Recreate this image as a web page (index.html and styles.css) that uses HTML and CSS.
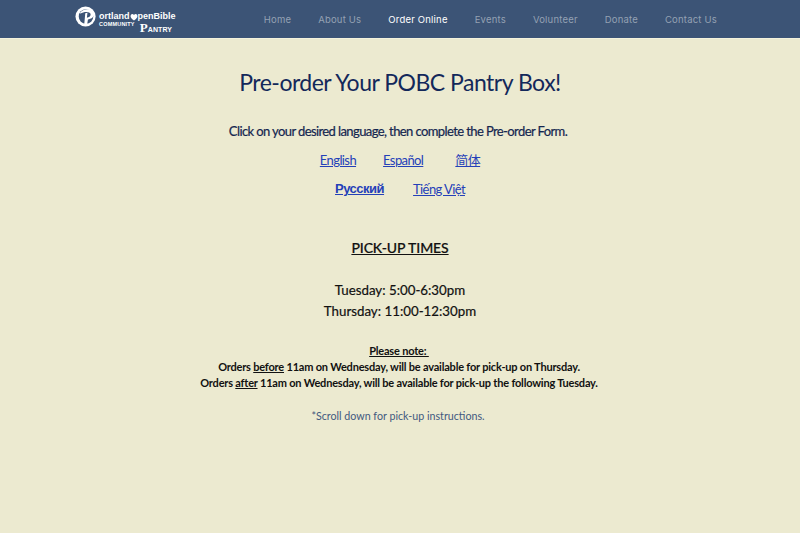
FILE: index.html
```html
<!DOCTYPE html>
<html lang="en">
  <head>
    <meta charset="UTF-8" />
    <meta name="viewport" content="width=device-width, initial-scale=1.0" />
    <title>Order Online</title>
    <link rel="stylesheet" href="styles.css">
  </head>

  <body>
    <header id="site-header">
      <a class="logo" href="#">
        <svg class="logo-mark" viewBox="0 0 24 24" width="23" height="23">
          <circle cx="11" cy="12" r="10.500" fill="#fff" />
          <circle cx="11.500" cy="12" r="7.600" fill="#3c5476" />
          <path d="M5.500 7.500c2.500-2.500 6-3.500 9-3 3.500.5 6 2.500 5.500 5.500-.5 3-3.500 4.800-6.500 5l-1 6.500-3 .5 1.200-13.500 2.300-.3-.6 5c2.200-.2 3.800-1.400 3.900-3 .1-1.700-1.600-2.800-4.300-2.800-2.500 0-4.500.6-6.500 1.600z" fill="#fff" />
        </svg>
        <span class="logo-text">
          <span class="logo-top">ortland<svg class="logo-heart" viewBox="0 0 10 10" width="8" height="8"><path d="M5 9.500C1 6.500 0 4.500 1 2.500 2 .8 4 1 5 2.500 6 1 8 .8 9 2.500c1 2 0 4-4 7z" fill="#fff" /></svg>penBible</span>
          <span class="logo-bottom"><span class="logo-community">COMMUNITY</span><span class="logo-pantry"><span class="logo-cap">P</span>ANTRY</span></span>
        </span>
      </a>
      <nav class="main-nav">
        <a href="#">Home</a>
        <a href="#">About Us</a>
        <a class="active" href="#">Order Online</a>
        <a href="#">Events</a>
        <a href="#">Volunteer</a>
        <a href="#">Donate</a>
        <a href="#">Contact Us</a>
      </nav>
    </header>

    <main id="content">
      <h1>Pre-order Your POBC Pantry Box!</h1>
      <p class="lead">Click on your desired language, then complete the Pre-order Form.</p>
      <div class="lang-row lang-first">
        <a href="#">English</a>
        <a href="#">Español</a>
        <a class="lang-zh" href="#" lang="zh">简体</a>
      </div>
      <div class="lang-row lang-second">
        <a class="lang-ru" href="#" lang="ru">Русский</a>
        <a href="#" lang="vi">Tiếng Việt</a>
      </div>
      <h2>PICK-UP TIMES</h2>
      <p class="time">Tuesday: 5:00-6:30pm</p>
      <p class="time">Thursday: 11:00-12:30pm</p>
      <div class="note">
        <p><u>Please note:&nbsp;</u></p>
        <p>Orders <u>before</u> 11am on Wednesday, will be available for pick-up on Thursday.</p>
        <p>Orders <u>after</u> 11am on Wednesday, will be available for pick-up the following Tuesday.</p>
      </div>
      <p class="scroll-hint">*Scroll down for pick-up instructions.</p>
    </main>
  </body>
</html>
```

FILE: styles.css
```css
html,
body {
  margin: 0;
  height: 100%;
}

body {
  background-color: #ecead0;
  font-family: Lato, "Noto Sans CJK SC", sans-serif;
  overflow: hidden;
}

p {
  margin: 0;
}

#site-header {
  height: 38px;
  background-color: #3c5476;
  border-bottom: 1px solid #f4f2dc;
  display: flex;
  align-items: flex-start;
  padding: 0 83px 0 75px;
}

.logo {
  display: flex;
  align-items: flex-start;
  margin-top: 5px;
  color: #fff;
  text-decoration: none;
  font-family: "Liberation Sans", sans-serif;
  font-weight: bold;
}

.logo-text {
  display: flex;
  flex-direction: column;
  margin: 7px 0 0 1px;
}

.logo-top {
  display: flex;
  align-items: center;
  font-size: 9px;
  line-height: 9px;
}

.logo-bottom {
  display: flex;
  align-items: flex-start;
  font-size: 5.500px;
  line-height: 7px;
}

.logo-community {
  letter-spacing: 0.2px;
}

.logo-pantry {
  margin-left: 5px;
  margin-top: 3px;
  font-size: 7px;
  letter-spacing: 0.1px;
}

.logo-cap {
  font-family: "Liberation Serif", serif;
  font-size: 13px;
  line-height: 7px;
}

.main-nav {
  display: flex;
  gap: 27px;
  margin-left: auto;
  margin-top: 13px;
}

.main-nav a {
  font-family: Inter, sans-serif;
  font-size: 9.500px;
  line-height: 13px;
  letter-spacing: 0.2px;
  color: #94a1b3;
  text-decoration: none;
}

.main-nav a.active {
  color: #fff;
}

#content {
  text-align: center;
  padding-top: 29px;
}

h1 {
  margin: 0;
  font-size: 23px;
  line-height: 29px;
  font-weight: 400;
  letter-spacing: -0.5px;
  color: #13285a;
}

.lead {
  margin-top: 25px;
  padding-right: 4px;
  font-size: 13px;
  line-height: 18px;
  letter-spacing: -0.6px;
  -webkit-text-stroke: 0.2px #14264f;
  color: #14264f;
}

.lang-row {
  display: flex;
  justify-content: center;
  font-size: 13px;
  line-height: 18px;
  letter-spacing: -0.6px;
}

.lang-row a {
  color: #2440b8;
}

.lang-first {
  gap: 27px;
  margin-top: 11px;
}

.lang-second {
  gap: 29px;
  margin-top: 11px;
}

.lang-zh {
  margin-left: 5px;
}

.lang-ru {
  font-family: "Liberation Sans", sans-serif;
  font-weight: bold;
  letter-spacing: -0.5px;
}

h2 {
  margin: 41px 0 23px;
  font-size: 14px;
  line-height: 18px;
  font-weight: 500;
  letter-spacing: -0.1px;
  -webkit-text-stroke: 0.2px #111;
  color: #111;
  text-decoration: underline;
}

.time {
  font-size: 13.300px;
  line-height: 21px;
  -webkit-text-stroke: 0.2px #111;
  color: #111;
}

.note {
  margin-top: 21px;
  padding-right: 2px;
  font-size: 11px;
  line-height: 16px;
  font-weight: 700;
  letter-spacing: -0.2px;
  color: #111;
}

.scroll-hint {
  margin-top: 17px;
  padding-right: 4px;
  font-size: 10.700px;
  line-height: 16px;
  color: #42597f;
}
```
